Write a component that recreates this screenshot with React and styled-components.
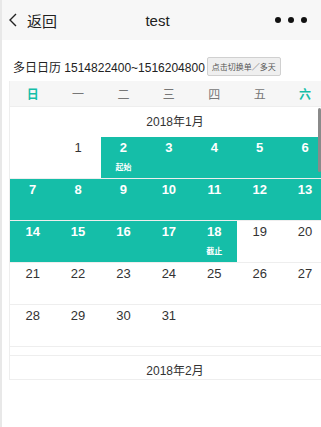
import React from 'react'
import styled, { createGlobalStyle } from 'styled-components'

const TEAL = '#15bea8'

const GlobalStyle = createGlobalStyle`
  html, body {
    margin: 0;
    padding: 0;
    background: #fff;
  }
  body {
    font-family: "Liberation Sans", "Noto Sans CJK SC", sans-serif;
  }
`

const Page = styled.div`
  position: relative;
  width: 321px;
  height: 427px;
  overflow: hidden;
  box-sizing: border-box;
  border-left: 2px solid #e8e8e8;
  background: #fff;
`

const Header = styled.div`
  height: 40px;
  display: grid;
  grid-template-columns: 1fr auto 1fr;
  align-items: center;
  padding: 0 14px 0 6px;
  background: #f7f7f7;
  color: #222;
  font-size: 15px;
`

const Back = styled.div`
  display: flex;
  align-items: center;
  gap: 9px;
`

const Title = styled.div`
  font-size: 15px;
`

const Dots = styled.div`
  justify-self: end;
  display: flex;
  gap: 7px;
`

const Dot = styled.span`
  width: 6px;
  height: 6px;
  border-radius: 50%;
  background: #111;
`

const InfoRow = styled.div`
  display: flex;
  align-items: center;
  gap: 2px;
  padding: 16px 0 5px 11px;
  height: 20px;
  font-size: 12px;
  color: #222;
`

const Toggle = styled.button`
  font-family: "Noto Sans CJK SC", sans-serif;
  font-size: 8px;
  color: #555;
  background: #efefef;
  border: 1px solid #d0d0d0;
  border-radius: 2px;
  padding: 0 4px;
  height: 19px;
  line-height: 17px;
`

const Calendar = styled.div`
  margin-left: 7px;
  width: 330px;
  border-left: 1px solid #eee;
`

const Grid = styled.div`
  display: grid;
  grid-template-columns: repeat(7, 45.4px);
`

const WeekRow = styled(Grid)`
  height: 25px;
  align-items: center;
  background: #f6f6f6;
  border-bottom: 1px solid #eee;
`

const WeekDay = styled.div`
  text-align: center;
  font-size: 12px;
  color: ${p => (p.$weekend ? TEAL : '#777')};
  font-weight: ${p => (p.$weekend ? 700 : 400)};
`

const Scroller = styled.div`
  position: relative;
  height: 272px;
  overflow: hidden;
  border-bottom: 1px solid #eee;
`

const Thumb = styled.div`
  position: absolute;
  left: 308px;
  top: 1px;
  width: 3px;
  height: 64px;
  border-radius: 2px;
  background: #8a8a8a;
`

const Month = styled.div`
  padding-bottom: 8px;
  border-bottom: 1px solid #eee;
`

const MonthTitle = styled.div`
  height: 30px;
  line-height: 30px;
  text-align: center;
  font-size: 12px;
  color: #333;
`

const WeekLine = styled(Grid)`
  height: 41px;
  border-bottom: 1px solid #eee;
`

const Cell = styled.div`
  display: flex;
  flex-direction: column;
  align-items: center;
  padding-top: 3px;
  background: ${p => (p.$on ? TEAL : 'transparent')};
  color: ${p => (p.$on ? '#fff' : '#333')};
`

const Num = styled.span`
  font-size: 13px;
  line-height: 16px;
  font-weight: ${p => (p.$on ? 700 : 400)};
`

const Tag = styled.span`
  margin-top: 6px;
  font-family: "Noto Sans CJK SC", sans-serif;
  font-size: 8px;
  line-height: 10px;
  font-weight: 700;
`

const weekNames = ['日', '一', '二', '三', '四', '五', '六']

const buildWeeks = () => {
  const days = [null, ...Array.from({ length: 31 }, (_, i) => i + 1)]
  while (days.length % 7) days.push(null)
  const weeks = []
  for (let i = 0; i < days.length; i += 7) weeks.push(days.slice(i, i + 7))
  return weeks
}

const tags = { 2: '起始', 18: '截止' }

const App = () => {
  const weeks = buildWeeks()
  return (
    <Page>
      <GlobalStyle />
      <Header>
        <Back>
          <svg width="10" height="14" viewBox="0 0 10 14">
            <path d="M8 1 L2 7 L8 13" fill="none" stroke="#222" strokeWidth="1.4" />
          </svg>
          <span>返回</span>
        </Back>
        <Title>test</Title>
        <Dots>
          <Dot />
          <Dot />
          <Dot />
        </Dots>
      </Header>
      <InfoRow>
        <span>多日日历 1514822400~1516204800</span>
        <Toggle>点击切换单／多天</Toggle>
      </InfoRow>
      <Calendar>
        <WeekRow>
          {weekNames.map((w, i) => (
            <WeekDay key={w} $weekend={i === 0 || i === 6}>{w}</WeekDay>
          ))}
        </WeekRow>
        <Scroller>
          <Thumb />
          <Month>
            <MonthTitle>2018年1月</MonthTitle>
            {weeks.map((week, wi) => (
              <WeekLine key={wi}>
                {week.map((d, di) => {
                  const on = d !== null && d >= 2 && d <= 18
                  return (
                    <Cell key={di} $on={on}>
                      {d !== null && <Num $on={on}>{d}</Num>}
                      {tags[d] && <Tag>{tags[d]}</Tag>}
                    </Cell>
                  )
                })}
              </WeekLine>
            ))}
          </Month>
          <MonthTitle>2018年2月</MonthTitle>
        </Scroller>
      </Calendar>
    </Page>
  )
}

export default App
